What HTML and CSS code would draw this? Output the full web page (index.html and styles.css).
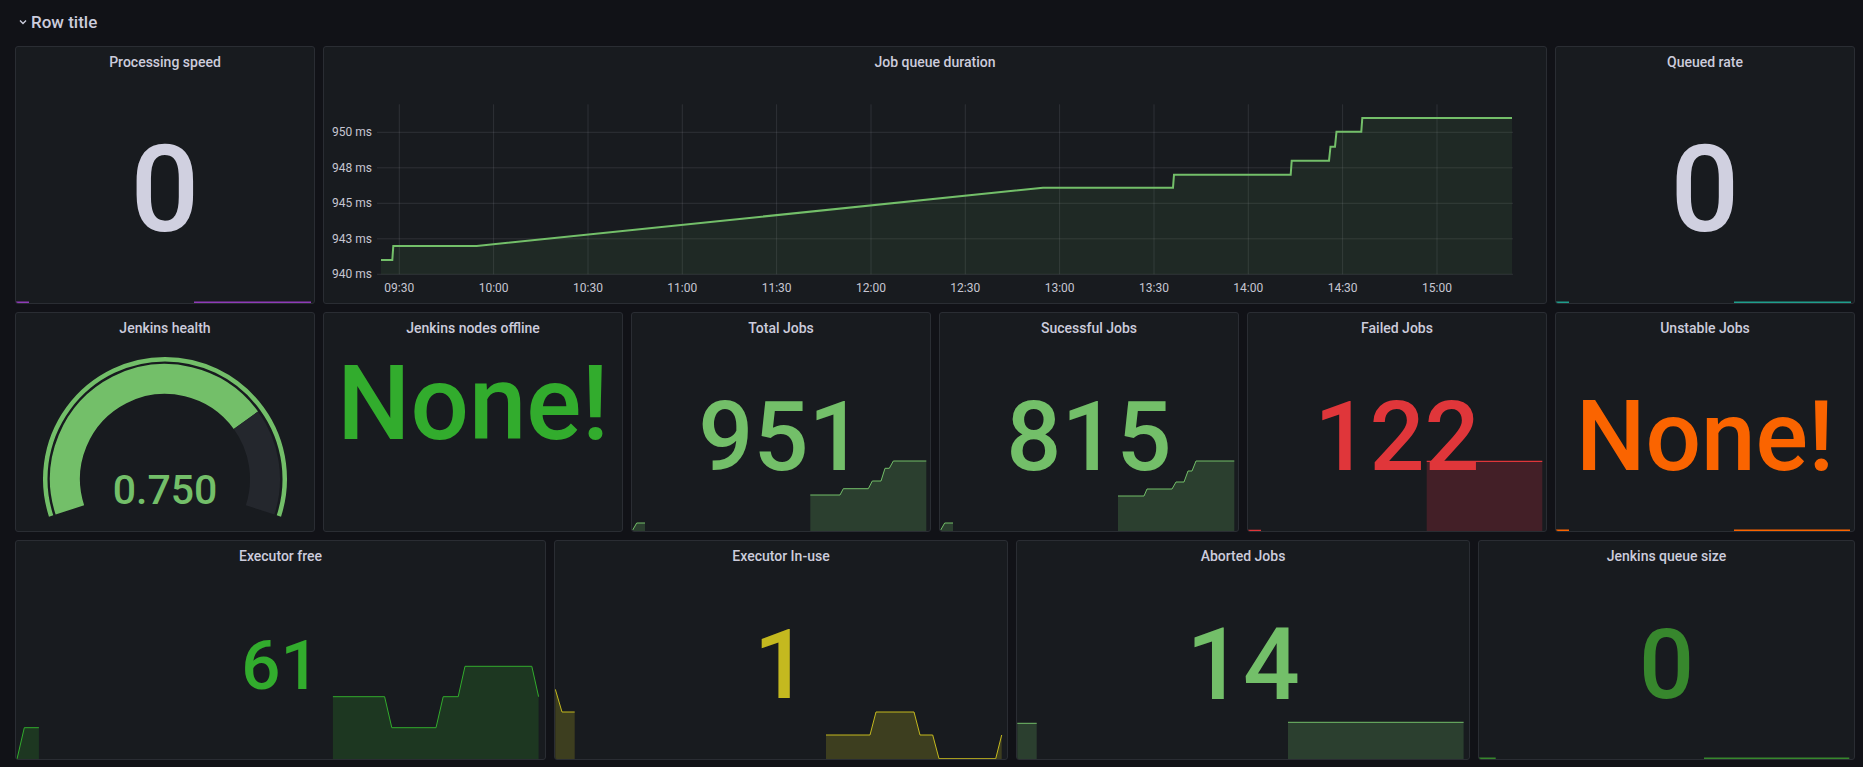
FILE: index.html
```html
<!DOCTYPE html>
<html>
<head>
<meta charset="utf-8">
<link rel="stylesheet" href="styles.css">
</head>
<body>
<div class="dashboard">
  <div class="row-header">
    <svg class="chev" viewBox="0 0 8 8" width="8" height="8"><path d="M1 2.5 L4 5.5 L7 2.5" fill="none" stroke="#ccccdc" stroke-width="1.4"/></svg>
    <span>Row title</span>
  </div>
  <div class="grid">
    <!-- Row 1 -->
    <div class="panel span4">
      <div class="panel-title">Processing speed</div>
      <div class="panel-body">
        <svg class="spark" viewBox="0 0 298 100" preserveAspectRatio="none">
          <path d="M0 99.3 L13 99.3 M178 99.3 L295 99.3" stroke="#8f3bb8" stroke-width="1.5" fill="none"/>
        </svg>
        <div class="value v-text size-121">0</div>
      </div>
    </div>
    <div class="panel span16">
      <div class="panel-title">Job queue duration</div>
      <div class="panel-body">
        <svg class="chart" viewBox="0 0 1222 225" width="1222" height="225">
          <g stroke="rgba(204,204,220,0.12)" stroke-width="1">
            <path d="M53 54.3 H1189 M53 89.8 H1189 M53 125.3 H1189 M53 160.8 H1189 M53 196.3 H1189"/>
            <path d="M75.3 26.3 V196.3 M169.6 26.3 V196.3 M264 26.3 V196.3 M358.3 26.3 V196.3 M452.6 26.3 V196.3 M547 26.3 V196.3 M641.3 26.3 V196.3 M735.6 26.3 V196.3 M830 26.3 V196.3 M924.3 26.3 V196.3 M1018.6 26.3 V196.3 M1113 26.3 V196.3"/>
          </g>
          <path d="M57 182 L68.3 182 L69.3 168 L152.7 168 L719 109.7 L849 109.7 L850 96.7 L966.7 96.7 L967.7 82.7 L1005 82.7 L1006.5 68.7 L1011 68.7 L1012.5 53.7 L1037.3 53.7 L1038.3 40 L1188 40 L1188 196.3 L57 196.3 Z" fill="rgba(115,191,105,0.09)"/>
          <path d="M57 182 L68.3 182 L69.3 168 L152.7 168 L719 109.7 L849 109.7 L850 96.7 L966.7 96.7 L967.7 82.7 L1005 82.7 L1006.5 68.7 L1011 68.7 L1012.5 53.7 L1037.3 53.7 L1038.3 40 L1188 40" fill="none" stroke="#73bf69" stroke-width="2"/>
          <g class="axis" text-anchor="end">
            <text x="48" y="58">950 ms</text>
            <text x="48" y="93.5">948 ms</text>
            <text x="48" y="129">945 ms</text>
            <text x="48" y="164.5">943 ms</text>
            <text x="48" y="200">940 ms</text>
          </g>
          <g class="axis" text-anchor="middle">
            <text x="75.3" y="214">09:30</text>
            <text x="169.6" y="214">10:00</text>
            <text x="264" y="214">10:30</text>
            <text x="358.3" y="214">11:00</text>
            <text x="452.6" y="214">11:30</text>
            <text x="547" y="214">12:00</text>
            <text x="641.3" y="214">12:30</text>
            <text x="735.6" y="214">13:00</text>
            <text x="830" y="214">13:30</text>
            <text x="924.3" y="214">14:00</text>
            <text x="1018.6" y="214">14:30</text>
            <text x="1113" y="214">15:00</text>
          </g>
        </svg>
      </div>
    </div>
    <div class="panel span4">
      <div class="panel-title">Queued rate</div>
      <div class="panel-body">
        <svg class="spark" viewBox="0 0 298 100" preserveAspectRatio="none">
          <path d="M0 99.3 L13 99.3 M178 99.3 L295 99.3" stroke="#1f9e8c" stroke-width="1.5" fill="none"/>
        </svg>
        <div class="value v-text size-121">0</div>
      </div>
    </div>

    <!-- Row 2 -->
    <div class="panel span4">
      <div class="panel-title">Jenkins health</div>
      <div class="panel-body">
        <svg class="gauge" viewBox="0 0 298 188" width="298" height="188">
          <path d="M35.11 173 A119.75 119.75 0 1 1 262.89 173" fill="none" stroke="#73bf69" stroke-width="4.5"/>
          <path d="M53.89 166.9 A100 100 0 0 1 229.9 77.22" fill="none" stroke="#73bf69" stroke-width="30"/>
          <path d="M229.9 77.22 A100 100 0 0 1 244.11 166.9" fill="none" stroke="#24272d" stroke-width="30"/>
          <text class="gauge-value" x="149" y="161" text-anchor="middle">0.750</text>
        </svg>
      </div>
    </div>
    <div class="panel span4">
      <div class="panel-title">Jenkins nodes offline</div>
      <div class="panel-body body-up">
        <div class="value v-green-old size-103">None!</div>
      </div>
    </div>
    <div class="panel span4">
      <div class="panel-title">Total Jobs</div>
      <div class="panel-body">
        <svg class="spark" viewBox="0 0 298 100" preserveAspectRatio="none">
          <path d="M0.7 100 L0.7 99 L4.7 92 L13 92 L13 100 Z M178.3 100 L178.3 64 L208 64 L211.3 57.7 L236.3 57.7 L240.3 50 L249 50 L253 37.3 L257.3 37.3 L261.3 30 L294.3 30 L294.3 100 Z" fill="rgba(115,191,105,0.22)"/>
          <path d="M0.7 99 L4.7 92 L13 92 M178.3 64 L208 64 L211.3 57.7 L236.3 57.7 L240.3 50 L249 50 L253 37.3 L257.3 37.3 L261.3 30 L294.3 30" fill="none" stroke="#73bf69" stroke-width="1"/>
        </svg>
        <div class="value v-green size-97">951</div>
      </div>
    </div>
    <div class="panel span4">
      <div class="panel-title">Sucessful Jobs</div>
      <div class="panel-body">
        <svg class="spark" viewBox="0 0 298 100" preserveAspectRatio="none">
          <path d="M0.7 100 L0.7 99 L4.7 92 L13 92 L13 100 Z M178 100 L178 65 L204 65 L207 58 L232 58 L236 51 L244 51 L248 40 L252 40 L256 30 L294.3 30 L294.3 100 Z" fill="rgba(115,191,105,0.22)"/>
          <path d="M0.7 99 L4.7 92 L13 92 M178 65 L204 65 L207 58 L232 58 L236 51 L244 51 L248 40 L252 40 L256 30 L294.3 30" fill="none" stroke="#73bf69" stroke-width="1"/>
        </svg>
        <div class="value v-green size-97">815</div>
      </div>
    </div>
    <div class="panel span4">
      <div class="panel-title">Failed Jobs</div>
      <div class="panel-body">
        <svg class="spark" viewBox="0 0 298 100" preserveAspectRatio="none">
          <path d="M178.7 100 L178.7 30.3 L294.3 30.3 L294.3 100 Z" fill="rgba(224,47,68,0.22)"/>
          <path d="M0 99.3 L13 99.3 M178.7 30.3 L294.3 30.3" fill="none" stroke="#e0363a" stroke-width="1.2"/>
        </svg>
        <div class="value v-red size-97">122</div>
      </div>
    </div>
    <div class="panel span4">
      <div class="panel-title">Unstable Jobs</div>
      <div class="panel-body">
        <svg class="spark" viewBox="0 0 298 100" preserveAspectRatio="none">
          <path d="M0 99.3 L13 99.3 M178 99.3 L294 99.3" stroke="#fa6400" stroke-width="1.5" fill="none"/>
        </svg>
        <div class="value v-orange size-98">None!</div>
      </div>
    </div>

    <!-- Row 3 -->
    <div class="panel span7">
      <div class="panel-title">Executor free</div>
      <div class="panel-body">
        <svg class="spark" viewBox="0 0 529 100" preserveAspectRatio="none">
          <path d="M1 100 L8.3 68.7 L22.9 68.7 L22.9 100 Z M316.9 100 L316.9 37.7 L368.6 37.7 L375.8 68.7 L420 68.7 L427.2 37.7 L442.2 37.7 L449 7.3 L515.8 7.3 L522.6 37.7 L522.6 100 Z" fill="rgba(50,172,45,0.2)"/>
          <path d="M1 100 L8.3 68.7 L22.9 68.7 M316.9 37.7 L368.6 37.7 L375.8 68.7 L420 68.7 L427.2 37.7 L442.2 37.7 L449 7.3 L515.8 7.3 L522.6 37.7" fill="none" stroke="#32ac2d" stroke-width="1"/>
        </svg>
        <div class="value v-green-old size-69">61</div>
      </div>
    </div>
    <div class="panel span6">
      <div class="panel-title">Executor In-use</div>
      <div class="panel-body">
        <svg class="spark" viewBox="0 0 452 100" preserveAspectRatio="none">
          <path d="M0.3 100 L0.3 30.3 L7 53 L19.7 53 L19.7 100 Z M271 100 L271 76 L315 76 L321 53 L359 53 L365 76 L377.7 76 L384 99.7 L440.7 99.7 L446.7 76 L446.7 100 Z" fill="rgba(196,185,31,0.22)"/>
          <path d="M0.3 30.3 L7 53 L19.7 53 M271 76 L315 76 L321 53 L359 53 L365 76 L377.7 76 L384 99.7 L440.7 99.7 L446.7 76" fill="none" stroke="#c4b91f" stroke-width="1"/>
        </svg>
        <div class="value v-yellow size-96">1</div>
      </div>
    </div>
    <div class="panel span6">
      <div class="panel-title">Aborted Jobs</div>
      <div class="panel-body">
        <svg class="spark" viewBox="0 0 452 100" preserveAspectRatio="none">
          <path d="M0.3 100 L0.3 64.3 L19.7 64.3 L19.7 100 Z M271 100 L271 63.3 L446.6 63.3 L446.6 100 Z" fill="rgba(115,191,105,0.22)"/>
          <path d="M0.3 64.3 L19.7 64.3 M271 63.3 L446.6 63.3" fill="none" stroke="#73bf69" stroke-width="1"/>
        </svg>
        <div class="value v-green size-100">14</div>
      </div>
    </div>
    <div class="panel span5">
      <div class="panel-title">Jenkins queue size</div>
      <div class="panel-body">
        <svg class="spark" viewBox="0 0 375 100" preserveAspectRatio="none">
          <path d="M0 99.3 L16.7 99.3 M225 99.3 L370.3 99.3" stroke="#37872d" stroke-width="1.5" fill="none"/>
        </svg>
        <div class="value v-darkgreen size-97">0</div>
      </div>
    </div>
  </div>
</div>
</body>
</html>
```

FILE: styles.css
```css
* { box-sizing: border-box; }

body {
  margin: 0;
  background: #111217;
  font-family: Roboto, "Liberation Sans", sans-serif;
  color: #ccccdc;
}

.dashboard {
  padding: 0 8px 0 15px;
}

.row-header {
  height: 46px;
  display: flex;
  align-items: center;
  gap: 4px;
  padding-left: 4px;
  padding-bottom: 2px;
  font-size: 17px;
  font-weight: 500;
  color: #ccccdc;
}

.chev { display: block; }

.grid {
  display: grid;
  grid-template-columns: repeat(24, 69px);
  grid-template-rows: 258px 220px 220px;
  gap: 8px;
}

.span4 { grid-column: span 4; }
.span5 { grid-column: span 5; }
.span6 { grid-column: span 6; }
.span7 { grid-column: span 7; }
.span16 { grid-column: span 16; }

.panel {
  background: #181b1f;
  border: 1px solid #2a2d33;
  border-radius: 3px;
  display: flex;
  flex-direction: column;
  overflow: hidden;
}

.panel-title {
  flex: none;
  height: 30px;
  line-height: 30px;
  text-align: center;
  font-size: 14px;
  font-weight: 500;
  color: #ccccdc;
}

.panel-body {
  flex: 1;
  position: relative;
  display: flex;
  align-items: center;
  justify-content: center;
}

.body-up {
  align-items: flex-start;
  padding-top: 9px;
}

.spark {
  position: absolute;
  left: 0;
  bottom: 0;
  width: 100%;
  height: 100px;
  display: block;
}

.chart, .gauge { display: block; }

.axis text {
  font-size: 12px;
  fill: #c6c6d2;
  font-family: Roboto, "Liberation Sans", sans-serif;
}

.gauge-value {
  font-size: 41px;
  font-weight: 500;
  fill: #73bf69;
  font-family: Roboto, "Liberation Sans", sans-serif;
}

.value {
  position: relative;
  font-weight: 500;
  line-height: 1;
  white-space: nowrap;
}

.size-121 { font-size: 121px; }
.size-103 { font-size: 103px; }
.size-100 { font-size: 100px; }
.size-98 { font-size: 98px; }
.size-97 { font-size: 97px; }
.size-96 { font-size: 96px; }
.size-69 { font-size: 69px; }

.v-text { color: #d0d0e0; }
.v-green { color: #73bf69; }
.v-green-old { color: #32ac2d; }
.v-darkgreen { color: #37872d; }
.v-red { color: #e0363a; }
.v-orange { color: #fa6400; }
.v-yellow { color: #c4b91f; }
```
